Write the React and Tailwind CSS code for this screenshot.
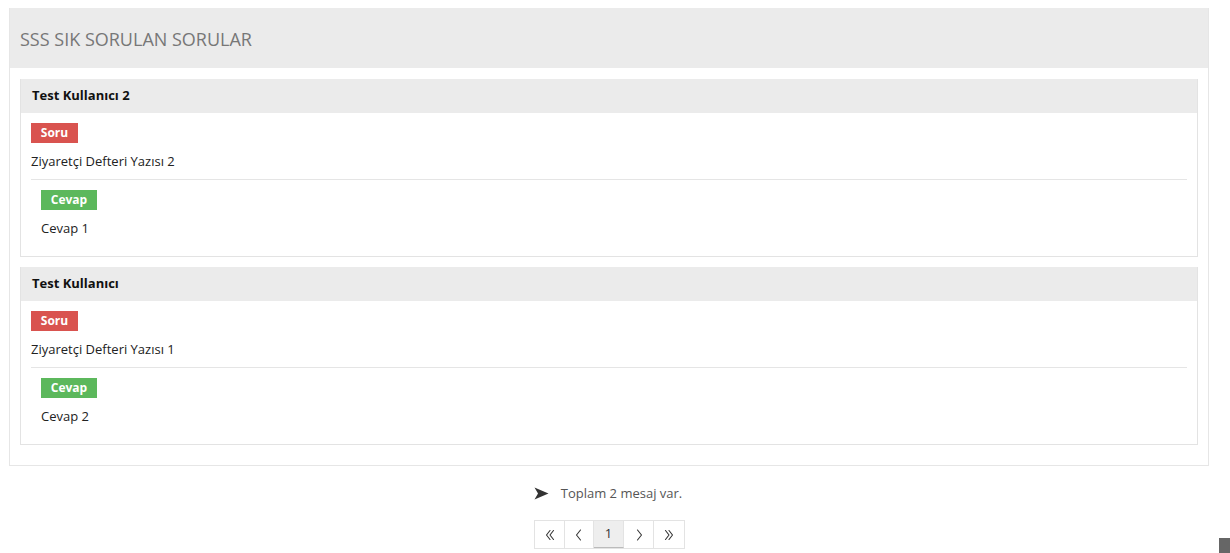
import React from "react";

const items = [
  { user: "Test Kullanıcı 2", q: "Ziyaretçi Defteri Yazısı 2", a: "Cevap 1" },
  { user: "Test Kullanıcı", q: "Ziyaretçi Defteri Yazısı 1", a: "Cevap 2" },
];

function Card({ user, q, a }) {
  return (
    <div className="border border-[#e3e3e3] border-t-0">
      <div className="bg-[#ebebeb] h-[34px] px-[11px] flex items-center text-[13px] font-bold text-[#111]">
        {user}
      </div>
      <div className="px-[10px] pt-[10px] pb-[18px]">
        <div className="flex items-center justify-center h-[20px] w-[47px] bg-[#d9534f] text-white text-[12px] font-bold">
          Soru
        </div>
        <div className="text-[13px] text-[#222] mt-[8px] leading-[20px]">{q}</div>
        <div className="border-t border-[#e5e5e5] mt-[8px] pt-[10px] pl-[10px]">
          <div className="flex items-center justify-center h-[20px] w-[56px] bg-[#5cb85c] text-white text-[12px] font-bold">
            Cevap
          </div>
          <div className="text-[13px] text-[#222] mt-[8px] leading-[20px]">{a}</div>
        </div>
      </div>
    </div>
  );
}

const Chev = ({ d }) => (
  <svg width="14" height="14" viewBox="0 0 14 14" fill="none" stroke="#333" strokeWidth="1.1" strokeLinecap="round" strokeLinejoin="round">
    <path d={d} />
  </svg>
);

export default function App() {
  return (
    <div className="relative w-[1230px] h-[553px] overflow-hidden bg-white" style={{ fontFamily: '"Open Sans", sans-serif' }}>
      <div className="pt-[8px] pl-[9px] pr-[21px]">
        <div className="border border-[#e6e6e6] border-t-0">
          <div className="bg-[#ebebeb] h-[60px] flex items-center px-[10px] text-[18px] text-[#777] pt-[2px]">
            SSS SIK SORULAN SORULAR
          </div>
          <div className="px-[10px] pt-[11px] pb-[20px] flex flex-col gap-[10px]">
            {items.map((it) => (
              <Card key={it.user} {...it} />
            ))}
          </div>
        </div>
      </div>
      <div className="flex justify-center mt-[17px]">
        <div className="flex items-center gap-[12px] text-[13px] text-[#555] ml-[-14px] leading-[20px]">
          <svg width="15" height="13" viewBox="0 0 15 13">
            <path d="M0.5 0.5 L14.5 6.5 L0.5 12.5 L4 6.5 Z" fill="#333" />
          </svg>
          <span>Toplam 2 mesaj var.</span>
        </div>
      </div>
      <div className="flex justify-center mt-[17px]">
        <div className="flex border border-[#e3e3e3] h-[29px] ml-[-11px]">
          <div className="w-[30px] flex items-center justify-center border-r border-[#e3e3e3]">
            <Chev d="M7 2.5 L3.5 7 L7 11.5 M10.5 2.5 L7 7 L10.5 11.5" />
          </div>
          <div className="w-[29px] flex items-center justify-center border-r border-[#e3e3e3]">
            <Chev d="M8.5 2 L4.5 7 L8.5 12" />
          </div>
          <div className="w-[30px] flex items-center justify-center border-r border-[#e3e3e3] bg-[#eeeeee] border-b border-b-[#bbb] text-[13px] text-[#333]">
            1
          </div>
          <div className="w-[30px] flex items-center justify-center border-r border-[#e3e3e3]">
            <Chev d="M5.5 2 L9.5 7 L5.5 12" />
          </div>
          <div className="w-[30px] flex items-center justify-center">
            <Chev d="M3.5 2.5 L7 7 L3.5 11.5 M7 2.5 L10.5 7 L7 11.5" />
          </div>
        </div>
      </div>
      <div className="absolute right-0 bottom-0 w-[11px] h-[15px] bg-[#666]" />
    </div>
  );
}
